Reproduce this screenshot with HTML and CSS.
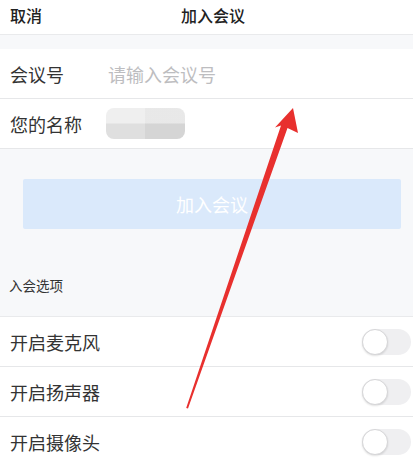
FILE: index.html
```html
<!DOCTYPE html>
<html lang="zh-CN">
<head>
<meta charset="utf-8">
<title>加入会议</title>
<link rel="stylesheet" href="styles.css">
</head>
<body>
<div class="page">
  <header class="header">
    <span class="cancel">取消</span>
    <span class="title">加入会议</span>
  </header>

  <section class="form">
    <div class="field">
      <span class="label">会议号</span>
      <span class="placeholder">请输入会议号</span>
    </div>
    <div class="field">
      <span class="label">您的名称</span>
      <span class="blur"></span>
    </div>
  </section>

  <div class="join-btn">加入会议</div>

  <div class="section-label">入会选项</div>

  <section class="options">
    <div class="option">
      <span>开启麦克风</span>
      <span class="switch"><span class="knob"></span></span>
    </div>
    <div class="option">
      <span>开启扬声器</span>
      <span class="switch"><span class="knob"></span></span>
    </div>
    <div class="option">
      <span>开启摄像头</span>
      <span class="switch"><span class="knob"></span></span>
    </div>
  </section>

  <svg class="arrow" width="413" height="463" viewBox="0 0 413 463">
    <polygon points="293,108 298,133 287.5,128 188,408.5 186.2,408 281,125.5 275,127.5" fill="#e8302e"/>
  </svg>
</div>
</body>
</html>
```

FILE: styles.css
```css
* { box-sizing: border-box; }

html, body {
  margin: 0;
  padding: 0;
}

body {
  background: #f7f8fa;
  font-family: "Noto Sans CJK SC", "Noto Sans", sans-serif;
  color: #333;
  width: 413px;
  height: 463px;
  overflow: hidden;
}

.page {
  position: relative;
  width: 413px;
  height: 463px;
}

.header {
  height: 35px;
  background: #fff;
  border-bottom: 1px solid #e9eaec;
  display: flex;
  align-items: center;
  padding: 0 0 4px 10px;
  font-size: 16px;
  font-weight: 500;
  color: #222;
}

.cancel { width: 32px; }
.title { margin-left: 139px; }

.form {
  margin-top: 14px;
  background: #fff;
}

.field {
  display: flex;
  align-items: center;
  height: 50px;
  border-bottom: 1px solid #e6e7e9;
  padding-left: 10px;
  font-size: 18px;
}

.label {
  width: 98px;
  flex: none;
}

.placeholder {
  color: #bdbdc0;
}

.blur {
  display: block;
  width: 79px;
  height: 31px;
  margin-left: -2px;
  border-radius: 8px;
  background:
    linear-gradient(to right, rgba(255,255,255,0.18) 0 50%, rgba(0,0,0,0.015) 50% 100%),
    linear-gradient(to bottom, #ececec 0 48%, #d8d8d8 52% 100%);
}

.join-btn {
  margin: 30px 12px 0 23px;
  height: 50px;
  background: #dae9fb;
  border-radius: 2px;
  color: #fff;
  font-size: 18px;
  display: flex;
  align-items: center;
  justify-content: center;
}

.section-label {
  padding: 47px 9px 21px;
  line-height: 19px;
  font-size: 13.5px;
  color: #333;
}

.options {
  background: #fff;
  border-top: 1px solid #e9eaec;
}

.option {
  height: 50px;
  border-bottom: 1px solid #e6e7e9;
  display: flex;
  align-items: center;
  justify-content: space-between;
  padding-left: 10px;
  padding-right: 2px;
  font-size: 18px;
}

.switch {
  display: block;
  width: 49px;
  height: 26px;
  border-radius: 13px;
  background: #efeff1;
  position: relative;
}

.knob {
  position: absolute;
  left: 0;
  top: 0;
  width: 26px;
  height: 26px;
  border-radius: 50%;
  background: #fff;
  border: 1px solid #d6d6d8;
  box-shadow: 0 1px 2px rgba(0,0,0,0.12);
}

.arrow {
  position: absolute;
  left: 0;
  top: 0;
  pointer-events: none;
}
```
